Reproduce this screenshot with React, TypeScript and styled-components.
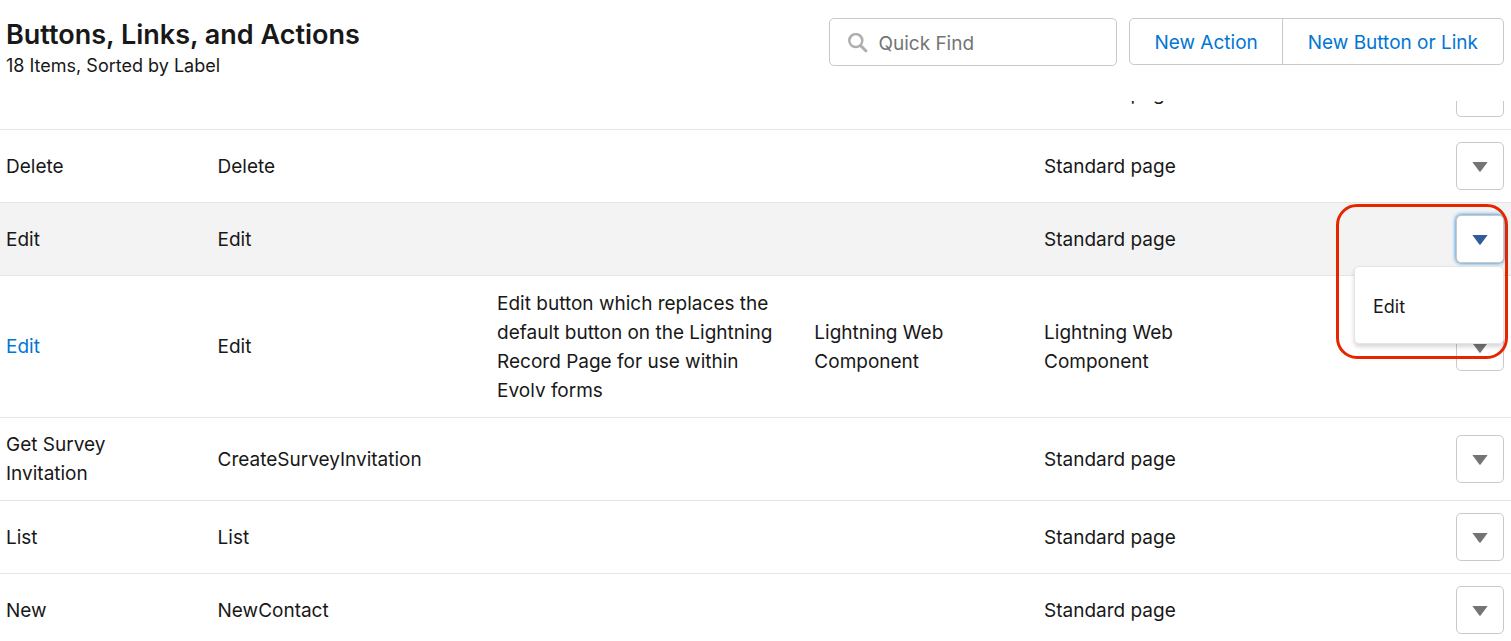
import { useLayoutEffect, useRef } from "react";
import styled, { createGlobalStyle, css } from "styled-components";

const GlobalStyle = createGlobalStyle`
  *, *::before, *::after { box-sizing: border-box; }
  body {
    margin: 0;
    background: #ffffff;
    color: #181818;
    font-family: Inter, "Liberation Sans", sans-serif;
    font-size: 19px;
    line-height: 29px;
  }
  button, input { font: inherit; }
`;

const Page = styled.main`
  display: flex;
  flex-direction: column;
  height: 100vh;
`;

const Header = styled.header`
  display: flex;
  align-items: flex-start;
  justify-content: space-between;
  gap: 24px;
  padding: 18px 7px 21px 6px;
`;

const Title = styled.h1`
  margin: 0;
  font-size: 27px;
  font-weight: 600;
  line-height: 33px;
`;

const Summary = styled.p`
  margin: 0;
  font-size: 18px;
`;

const Toolbar = styled.div`
  display: flex;
  gap: 12px;
`;

const SearchBox = styled.label`
  display: flex;
  align-items: center;
  gap: 10px;
  width: 288px;
  height: 48px;
  padding: 2px 18px 0;
  border: 1px solid #c9c9c9;
  border-radius: 5px;
`;

const SearchInput = styled.input`
  flex: 1;
  min-width: 0;
  padding: 0;
  border: 0;
  outline: 0;
  background: transparent;
  color: inherit;
  &::placeholder {
    color: #747474;
    opacity: 1;
  }
`;

const ButtonGroup = styled.div`
  display: flex;
  height: 47px;
  border: 1px solid #c9c9c9;
  border-radius: 5px;
`;

const GroupButton = styled.button`
  padding: 2px 24px 0;
  border: 0;
  background: transparent;
  color: #0176d3;
  white-space: nowrap;
  & + & {
    padding: 2px 25px 0;
    border-left: 1px solid #c9c9c9;
  }
`;

const ScrollArea = styled.div`
  flex: 1;
  min-height: 0;
  overflow: hidden auto;
  scrollbar-width: none;
`;

const Table = styled.table`
  width: 100%;
  table-layout: fixed;
  border-collapse: separate;
  border-spacing: 0;
`;

const Column = styled.col<{ $width?: string }>`
  width: ${(p) => p.$width ?? "auto"};
`;

const Row = styled.tr<{ $active?: boolean }>`
  background: ${(p) => (p.$active ? "#f3f3f3" : "#ffffff")};
`;

const Cell = styled.td`
  padding: 12px 24px 12px 6px;
  border-bottom: 1px solid #e5e5e5;
  vertical-align: middle;
`;

const DescriptionCell = styled(Cell)`
  padding-top: 13px;
`;

const ActionCell = styled(Cell)`
  padding-right: 7px;
`;

const LabelLink = styled.a`
  color: #0176d3;
  text-decoration: none;
`;

const MenuAnchor = styled.div`
  position: relative;
  width: 48px;
  height: 48px;
  margin-left: auto;
`;

const MenuButton = styled.button<{ $open?: boolean }>`
  display: flex;
  align-items: center;
  justify-content: center;
  width: 48px;
  height: 48px;
  padding: 2px 0 0;
  border: 1px solid #c9c9c9;
  border-radius: 5px;
  background: #ffffff;
  color: #747474;
  ${(p) =>
    p.$open &&
    css`
      color: #2f5c9b;
      box-shadow: 0 0 4px #0176d3;
    `}
`;

const Menu = styled.div`
  position: absolute;
  z-index: 1;
  top: 51px;
  right: 0;
  width: 150px;
  padding: 25px 0 22px;
  border: 1px solid #e5e5e5;
  border-radius: 5px;
  background: #ffffff;
  box-shadow: 0 3px 4px rgba(0, 0, 0, 0.16);
`;

const MenuItem = styled.button`
  display: block;
  width: 100%;
  padding: 0 18px;
  border: 0;
  background: transparent;
  color: inherit;
  font-size: 18px;
  text-align: left;
`;

const Highlight = styled.div`
  position: absolute;
  z-index: 2;
  top: -11px;
  right: -4px;
  width: 172px;
  height: 155px;
  border: 3px solid #e62600;
  border-radius: 21px;
  pointer-events: none;
`;

const SearchIcon = () => (
  <svg width="20" height="20" viewBox="0 0 20 20" fill="none" stroke="#aeaeae" aria-hidden="true">
    <circle cx="7.8" cy="7.6" r="6.5" strokeWidth="2.5" />
    <path d="M12.4 12.4 18.8 18.8" strokeWidth="2.9" />
  </svg>
);

const DownIcon = () => (
  <svg width="16" height="10" viewBox="0 0 16 10" fill="currentColor" aria-hidden="true">
    <path d="M.9 0h14.2q.6 0 .2.6L8.6 9.4q-.6.7-1.2 0L.7.6Q.3 0 .9 0Z" />
  </svg>
);

interface Action {
  label: string;
  name: string;
  description?: string;
  source?: string;
  type: string;
  linked?: boolean;
  open?: boolean;
}

const actions: Action[] = [
  { label: "", name: "", type: "Standard page" },
  { label: "Delete", name: "Delete", type: "Standard page" },
  { label: "Edit", name: "Edit", type: "Standard page", open: true },
  {
    label: "Edit",
    name: "Edit",
    description:
      "Edit button which replaces the default button on the Lightning Record Page for use within Evolv forms",
    source: "Lightning Web Component",
    type: "Lightning Web Component",
    linked: true,
  },
  { label: "Get Survey Invitation", name: "CreateSurveyInvitation", type: "Standard page" },
  { label: "List", name: "List", type: "Standard page" },
  { label: "New", name: "NewContact", type: "Standard page" },
];

const ROW_SCROLL = 44;

export default function App() {
  const scroller = useRef<HTMLDivElement>(null);

  // The list opens part-way through its first row.
  useLayoutEffect(() => {
    if (scroller.current) scroller.current.scrollTop = ROW_SCROLL;
  }, []);

  return (
    <Page>
      <GlobalStyle />
      <Header>
        <div>
          <Title>Buttons, Links, and Actions</Title>
          <Summary>18 Items, Sorted by Label</Summary>
        </div>
        <Toolbar>
          <SearchBox>
            <SearchIcon />
            <SearchInput type="text" placeholder="Quick Find" aria-label="Quick Find" />
          </SearchBox>
          <ButtonGroup>
            <GroupButton type="button">New Action</GroupButton>
            <GroupButton type="button">New Button or Link</GroupButton>
          </ButtonGroup>
        </Toolbar>
      </Header>
      <ScrollArea ref={scroller}>
        <Table>
          <colgroup>
            <Column $width="14%" />
            <Column $width="18.5%" />
            <Column $width="21%" />
            <Column $width="15.2%" />
            <Column $width="15.2%" />
            <Column />
          </colgroup>
          <tbody>
            {actions.map((action, index) => (
              <Row key={index} $active={action.open}>
                <Cell>
                  {action.linked ? <LabelLink href="#edit">{action.label}</LabelLink> : action.label}
                </Cell>
                <Cell>{action.name}</Cell>
                <DescriptionCell>{action.description}</DescriptionCell>
                <Cell>{action.source}</Cell>
                <Cell>{action.type}</Cell>
                <ActionCell>
                  <MenuAnchor>
                    <MenuButton
                      type="button"
                      $open={action.open}
                      aria-haspopup="menu"
                      aria-expanded={!!action.open}
                      aria-label="Show actions"
                    >
                      <DownIcon />
                    </MenuButton>
                    {action.open && (
                      <>
                        <Menu role="menu">
                          <MenuItem type="button" role="menuitem">
                            Edit
                          </MenuItem>
                        </Menu>
                        <Highlight />
                      </>
                    )}
                  </MenuAnchor>
                </ActionCell>
              </Row>
            ))}
          </tbody>
        </Table>
      </ScrollArea>
    </Page>
  );
}
